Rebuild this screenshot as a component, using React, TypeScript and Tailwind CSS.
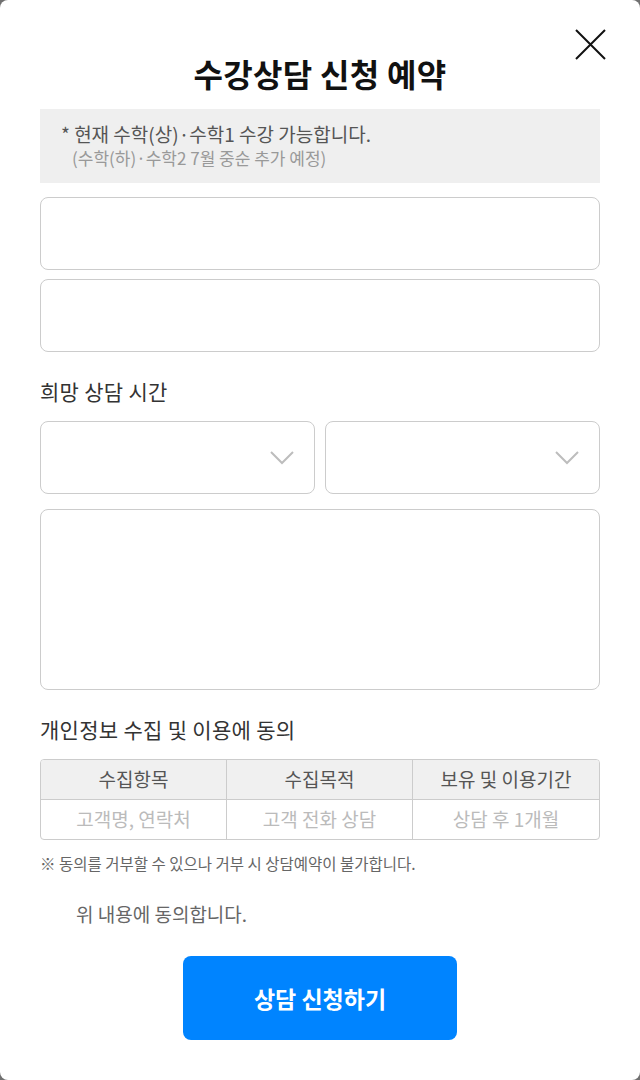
import React from "react";

const font = { fontFamily: '"Noto Sans CJK KR", "Noto Sans", sans-serif' };

const Chevron = () => (
  <svg width="24" height="14" viewBox="0 0 24 14" fill="none">
    <path d="M1 1l11 11L23 1" stroke="#bdbdbd" strokeWidth="2" />
  </svg>
);

const Select = () => (
  <div className="flex-1 h-[73px] border border-[#cccccc] rounded-[8px] flex items-center justify-end pr-[20px]">
    <Chevron />
  </div>
);

const App = () => {
  return (
    <div className="w-[640px] h-[1080px] bg-[#707070]" style={font}>
      <div className="relative w-full h-full bg-white rounded-[8px] px-[40px] pt-[50px]">
        <button className="absolute right-[34px] top-[29px]">
          <svg width="31" height="31" viewBox="0 0 31 31">
            <path d="M1 1l29 29M30 1L1 30" stroke="#111" strokeWidth="2" />
          </svg>
        </button>

        <h1 className="text-center text-[32px] font-bold text-[#111] leading-[46px] tracking-[0.3px]">
          수강상담 신청 예약
        </h1>

        <div className="mt-[13px] bg-[#efefef] h-[74px] pl-[21px] pt-[12px]">
          <p className="text-[19px] text-[#555] leading-[26px]">
            * 현재 수학(상)·수학1 수강 가능합니다.
          </p>
          <p className="pl-[11px] text-[17px] text-[#999] leading-[22px]">
            (수학(하)·수학2 7월 중순 추가 예정)
          </p>
        </div>

        <div className="mt-[14px] h-[73px] border border-[#cccccc] rounded-[8px]" />
        <div className="mt-[9px] h-[73px] border border-[#cccccc] rounded-[8px]" />

        <p className="mt-[24px] text-[21px] text-[#333] leading-[30px] tracking-[0.3px]">
          희망 상담 시간
        </p>

        <div className="mt-[15px] flex gap-[10px]">
          <Select />
          <Select />
        </div>

        <div className="mt-[15px] h-[181px] border border-[#cccccc] rounded-[8px]" />

        <p className="mt-[24px] text-[21px] text-[#333] leading-[30px] tracking-[0.3px]">
          개인정보 수집 및 이용에 동의
        </p>

        <div className="mt-[15px] border border-[#cccccc] rounded-[4px] overflow-hidden">
          <div className="grid grid-cols-3 h-[40px] bg-[#f0f0f0] border-b border-[#cccccc] text-[19px] text-[#555]">
            <div className="flex items-center justify-center border-r border-[#cccccc]">수집항목</div>
            <div className="flex items-center justify-center border-r border-[#cccccc]">수집목적</div>
            <div className="flex items-center justify-center">보유 및 이용기간</div>
          </div>
          <div className="grid grid-cols-3 h-[39px] text-[19px] text-[#bbbbbb]">
            <div className="flex items-center justify-center border-r border-[#cccccc]">고객명, 연락처</div>
            <div className="flex items-center justify-center border-r border-[#cccccc]">고객 전화 상담</div>
            <div className="flex items-center justify-center">상담 후 1개월</div>
          </div>
        </div>

        <p className="mt-[12px] text-[15.5px] text-[#666] leading-[22px]">
          ※ 동의를 거부할 수 있으나 거부 시 상담예약이 불가합니다.
        </p>

        <label className="mt-[27px] flex items-center pl-[36px] text-[19px] text-[#666] leading-[26px]">
          위 내용에 동의합니다.
        </label>

        <div className="mt-[29px] flex justify-center">
          <button className="w-[274px] h-[84px] bg-[#0084ff] rounded-[8px] text-white text-[23px] font-bold">
            상담 신청하기
          </button>
        </div>
      </div>
    </div>
  );
};

export default App;
